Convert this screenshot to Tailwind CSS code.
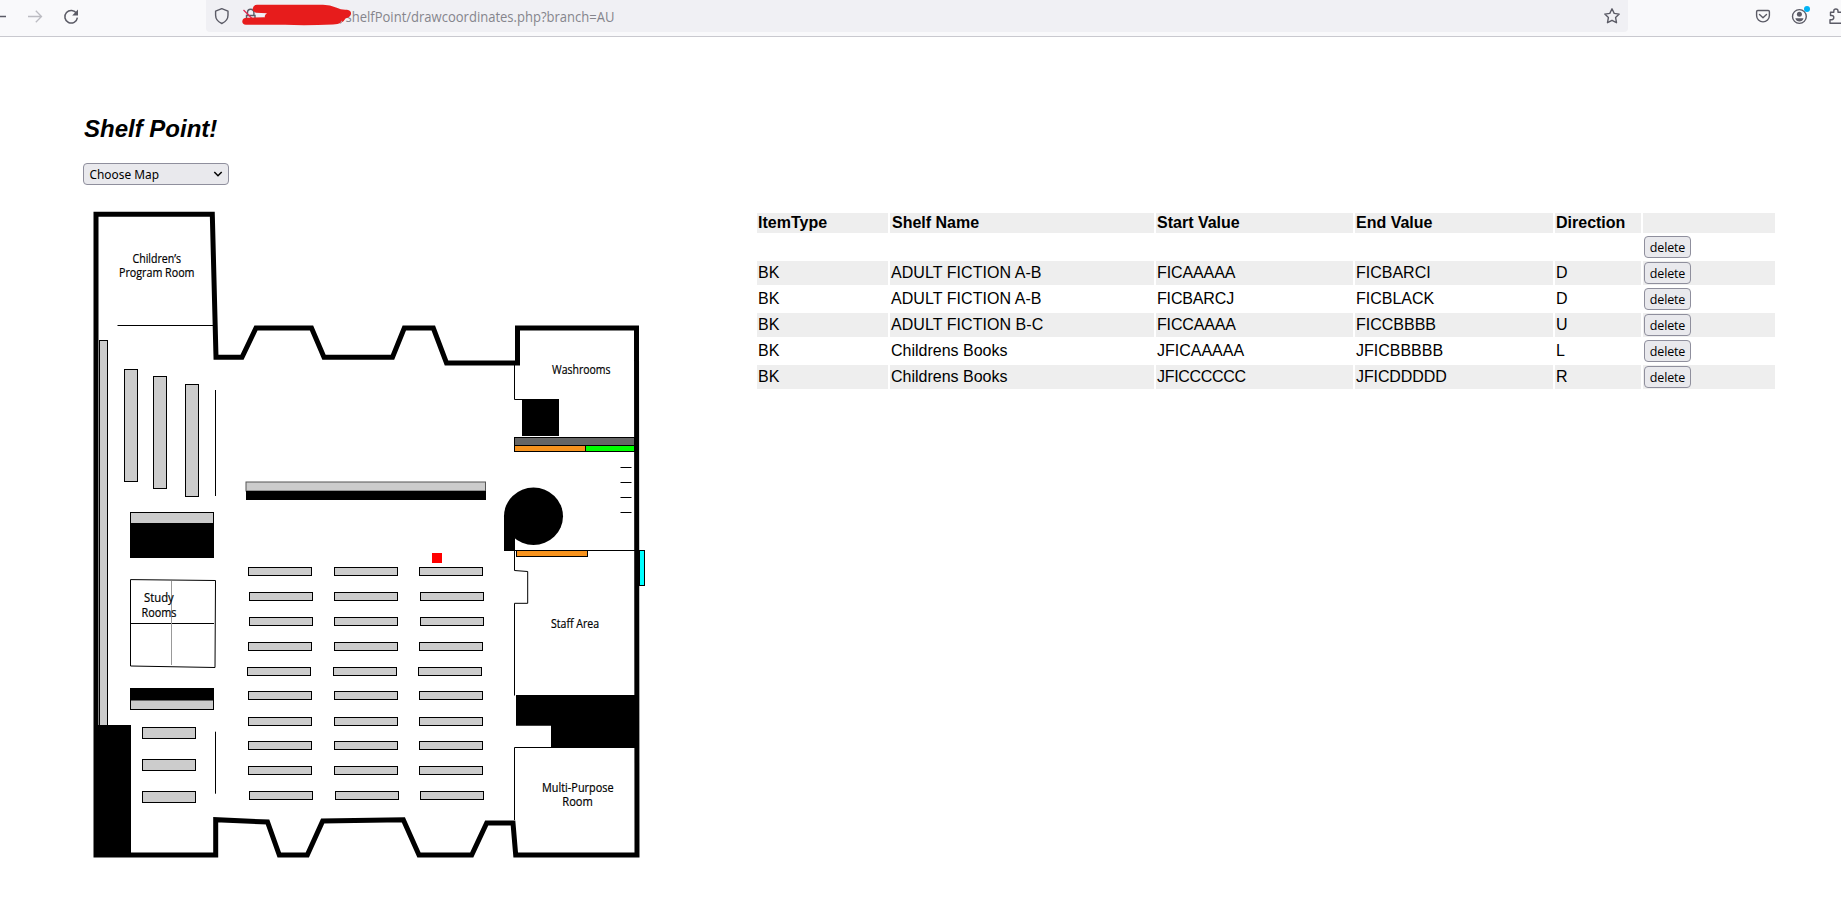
<!DOCTYPE html>
<html lang="en">
<head>
<meta charset="utf-8">
<title>Shelf Point!</title>
<script src="https://cdn.jsdelivr.net/npm/@tailwindcss/browser@4"></script>
</head>
<body class="bg-white text-black overflow-hidden h-[910px] w-[1841px] font-['Liberation_Sans',Arial,sans-serif]">
<header class="h-[37px] bg-[#f9f9fb] border-b border-[#c9c9cf] flex items-start">
  <svg class="w-[206px] h-8 shrink-0" viewBox="0 0 206 32" fill="none" stroke="#5b5b66" stroke-width="1.5">
    <path d="M0 16.5H6"/>
    <path stroke="#bcbcc2" stroke-width="1.3" d="M28 16.5H41.5M35.8 10.8l5.7 5.7-5.7 5.7"/>
    <path d="M76.6 13.6A6.3 6.3 0 1 0 77.4 17.6"/><path fill="#5b5b66" stroke="none" d="M78 9.6V15.4H72.2Z"/>
  </svg>
  <div class="w-[1422px] h-8 bg-[#f0f0f4] rounded-b flex items-center justify-between">
    <svg class="w-[600px] h-8 overflow-visible" viewBox="206 0 600 32" fill="none">
      <path stroke="#5b5b66" stroke-width="1.4" stroke-linejoin="round" d="M221.8 8.7l6.2 2.4v4.2c0 3.6-2.6 6.6-6.2 8.2c-3.600-1.600-6.200-4.600-6.200-8.200v-4.200z"/>
      <path stroke="#5b5b66" stroke-width="1.4" d="M246.500 19v-3.500h8.500v3.500M247.500 15v-2.500a3.200 3.200 0 0 1 6.400 0V15"/>
      <path stroke="#e22850" stroke-width="1.3" d="M243.500 10l9 9"/>
      <text x="345.500" y="21.700" font-size="14" fill="#85858c" textLength="269" lengthAdjust="spacingAndGlyphs" font-family="Open Sans, Noto Sans, sans-serif">shelfPoint/drawcoordinates.php?branch=AU</text>
      <path fill="#e71c1c" d="M257 4.700L322 4.700Q330 4.500 336 7.500Q342 10.300 347 9.700Q351.500 10.500 351 14Q350 17.500 345.500 18.500Q343 24 333 24.400Q305 25.700 285 24.700L246 24.800Q242 24 242.300 21Q243 17.700 247 17.800L265 17.300Q264 15 267 13.200L256 12.700Q252.500 12 252.700 8.500Q253.500 4.700 257 4.700Z"/>
      <path stroke="#a8a8b0" d="M340.500 23.800l1.200-3"/>
    </svg>
    <svg class="w-5 h-5 mr-[6px]" viewBox="0 0 20 20" fill="none" stroke="#5b5b66" stroke-width="1.400" stroke-linejoin="round"><path d="M10 2.800l2.200 4.600 5 .7-3.600 3.500.9 5.100L10 14.300l-4.500 2.400.9-5.100L2.800 8.100l5-.7z"/></svg>
  </div>
  <svg class="w-[213px] h-8 shrink-0" viewBox="1628 0 213 32" fill="none" stroke="#5b5b66" stroke-width="1.400" stroke-linejoin="round" stroke-linecap="round">
    <path d="M1757.800 10.500h10.400q1.200 0 1.200 1.200v3.800a6.400 6.400 0 0 1-12.800 0v-3.800q0-1.200 1.200-1.200zM1759.500 14.500l3.500 3.200 3.500-3.200"/>
    <circle cx="1799.400" cy="16.500" r="6.900"/><circle cx="1799.400" cy="14.200" r="2.500" fill="#5b5b66" stroke="none"/><path fill="#5b5b66" stroke="none" d="M1795.300 18.200h8.200q-1 3.300-4.100 3.300t-4.100-3.300z"/>
    <circle cx="1807" cy="9" r="3" fill="#00b3f4" stroke="none"/>
    <path d="M1842 12.300h-4v-1.200a2.100 2.100 0 0 0-4.200 0v1.200h-3.300v3.200h1.200a2.100 2.100 0 0 1 0 4.200h-1.700v3.500h12"/>
  </svg>
</header>
<main class="pl-[83px] pt-[78px]">
  <h1 class="pl-px text-[24px] leading-[28px] font-bold italic">Shelf Point!</h1>
  <button class="mt-[20px] w-[146px] h-[22px] flex items-center justify-between rounded-[4px] border border-[#8f8f9d] bg-[#e9e9ed] pl-[5px] pr-[5px]">
    <svg class="w-20 h-5" viewBox="0 0 80 20"><text x="0.500" y="14.500" font-size="13" textLength="69.500" lengthAdjust="spacingAndGlyphs" font-family="Noto Sans, sans-serif">Choose Map</text></svg>
    <svg class="w-[10px] h-[10px]" viewBox="0 0 10 10" fill="none" stroke="#000" stroke-width="1.500"><path d="M1.300 3l3.700 3.700L8.700 3"/></svg>
  </button>
  <div class="mt-[17px] flex items-start">
    <svg class="w-[597px] h-[670px] shrink-0" viewBox="83 202 597 670">
      <defs><rect id="s" x=".5" y=".5" width="63" height="8" fill="#ccc" stroke="#000"/></defs>
      <rect x="99.500" y="340.500" width="8" height="385" fill="#ccc" stroke="#000"/>
      <rect x="94" y="725" width="37" height="132"/>
      <path fill="none" stroke="#000" stroke-width="5" d="M96 214.300H212.300L216 357.300H242L256 328H311.500L324 357.300H392.500L404.300 328H433.300L446.500 363H517.500V328H636.500L637 855H515.700L513 823H486.700L471.700 855H419L403.300 819.700L322.700 821L307.300 855H279.300L267.500 822L215.700 819.700V855H96Z"/>
      <g fill="#ccc" stroke="#000">
        <rect x="124.500" y="369.500" width="13" height="112"/><rect x="153.500" y="376.500" width="13" height="112"/><rect x="185.500" y="384.500" width="13" height="112"/>
        <rect x="130.500" y="512.500" width="83" height="45"/><rect x="130.500" y="688.500" width="83" height="21"/>
        <rect x="142.500" y="727.500" width="53" height="11"/><rect x="142.500" y="759.500" width="53" height="11"/><rect x="142.500" y="791.500" width="53" height="11"/>
        <rect x="246" y="482" width="239.500" height="9" stroke="#555"/>
      </g>
      <rect x="130" y="523" width="84" height="35"/><rect x="130" y="688" width="84" height="12.500"/><rect x="246" y="491" width="240" height="9"/>
      <g fill="none" stroke="#000">
        <path d="M117.500 325.500H214M215.500 390V496M215.500 731.700V793.700M130.500 623.500H214"/>
        <path d="M130.500 579.600L215.500 580.500L215 667.500L130.500 666Z"/>
        <path stroke="#999" d="M171.500 581V665"/>
        <path d="M514.500 365V399.500M514.500 399.500H522M620.500 467.500h11M620.500 482.500h11M620.500 497.500h11M620.500 512.500h11M514.500 538V570.500L527.700 571.500V603.300H514.500V695.500M515 550.500H635M514.500 820V747.500H635"/>
      </g>
      <g>
        <use href="#s" x="248" y="567"/><use href="#s" x="334" y="567"/><use href="#s" x="419" y="567"/>
        <use href="#s" x="249" y="592"/><use href="#s" x="334" y="592"/><use href="#s" x="420" y="592"/>
        <use href="#s" x="249" y="617"/><use href="#s" x="334" y="617"/><use href="#s" x="420" y="617"/>
        <use href="#s" x="248" y="642"/><use href="#s" x="334" y="642"/><use href="#s" x="419" y="642"/>
        <use href="#s" x="247" y="667"/><use href="#s" x="333" y="667"/><use href="#s" x="418" y="667"/>
        <use href="#s" x="248" y="691"/><use href="#s" x="334" y="691"/><use href="#s" x="419" y="691"/>
        <use href="#s" x="248" y="717"/><use href="#s" x="334" y="717"/><use href="#s" x="419" y="717"/>
        <use href="#s" x="248" y="741"/><use href="#s" x="334" y="741"/><use href="#s" x="419" y="741"/>
        <use href="#s" x="248" y="766"/><use href="#s" x="334" y="766"/><use href="#s" x="419" y="766"/>
        <use href="#s" x="249" y="791"/><use href="#s" x="335" y="791"/><use href="#s" x="420" y="791"/>
      </g>
      <rect x="432" y="553" width="10" height="10" fill="#f00"/>
      <rect x="522" y="399" width="37" height="37"/>
      <rect x="514.500" y="437.500" width="120" height="8" fill="#666" stroke="#000"/>
      <rect x="514.500" y="445.500" width="71" height="6" fill="#f7931e" stroke="#000"/>
      <rect x="585.500" y="445.500" width="49" height="6" fill="#0f0" stroke="#000"/>
      <ellipse cx="533.500" cy="516.300" rx="29.500" ry="28.700"/><rect x="504" y="515" width="10.700" height="36"/>
      <rect x="516.500" y="550.500" width="71" height="6" fill="#f7931e" stroke="#000"/>
      <rect x="639.500" y="550.500" width="5" height="35" fill="#0ff" stroke="#000"/>
      <path d="M516 695H637V748H551V725.700H516Z"/>
      <g font-family="Open Sans, Noto Sans, sans-serif" font-size="12" stroke="#000" stroke-width=".2">
        <text x="132.500" y="263" textLength="48.500" lengthAdjust="spacingAndGlyphs">Children’s</text>
        <text x="119" y="276.700" textLength="75.500" lengthAdjust="spacingAndGlyphs">Program Room</text>
        <text x="552" y="374" textLength="58.500" lengthAdjust="spacingAndGlyphs">Washrooms</text>
        <text x="144" y="602" textLength="29.700" lengthAdjust="spacingAndGlyphs">Study</text>
        <text x="141.500" y="616.700" textLength="35" lengthAdjust="spacingAndGlyphs">Rooms</text>
        <text x="551" y="628" textLength="48" lengthAdjust="spacingAndGlyphs">Staff Area</text>
        <text x="542" y="791.700" textLength="71.500" lengthAdjust="spacingAndGlyphs">Multi-Purpose</text>
        <text x="562.300" y="805.700" textLength="30.500" lengthAdjust="spacingAndGlyphs">Room</text>
      </g>
    </svg>
    <table class="ml-[75px] mt-[9px] w-[1022px] table-fixed border-separate border-spacing-[2px] text-[16px] leading-[18px] [&_td]:p-px [&_th]:p-px [&_th]:text-left [&_th]:h-5 [&_td]:h-6 [&_td]:align-middle [&_tr:nth-child(odd)>*]:bg-[#eee] [&_button]:block [&_button]:w-[47px] [&_button]:h-[22px] [&_button]:rounded-[4px] [&_button]:border [&_button]:border-[#8f8f9d] [&_button]:bg-[#e9e9ed] [&_button]:pt-px [&_button]:text-[12.5px] [&_button]:tracking-[-0.15px] [&_button]:leading-[19px] [&_button]:font-['Open_Sans','Noto_Sans',sans-serif]">
      <colgroup><col class="w-[131px]"><col class="w-[264px]"><col class="w-[197px]"><col class="w-[198px]"><col class="w-[86px]"><col class="w-[132px]"></colgroup>
      <tbody>
      <tr><th>ItemType</th><th><span class="ml-[1px]">Shelf Name</span></th><th>Start Value</th><th>End Value</th><th>Direction</th><th></th></tr>
      <tr><td></td><td></td><td></td><td></td><td></td><td><button>delete</button></td></tr>
      <tr><td>BK</td><td class="tracking-[0.05px]">ADULT FICTION A-B</td><td class="tracking-[-0.1px]">FICAAAAA</td><td>FICBARCI</td><td>D</td><td><button>delete</button></td></tr>
      <tr><td>BK</td><td class="tracking-[0.05px]">ADULT FICTION A-B</td><td class="tracking-[-0.15px]">FICBARCJ</td><td>FICBLACK</td><td>D</td><td><button>delete</button></td></tr>
      <tr><td>BK</td><td class="tracking-[0.05px]">ADULT FICTION B-C</td><td class="tracking-[-0.15px]">FICCAAAA</td><td>FICCBBBB</td><td>U</td><td><button>delete</button></td></tr>
      <tr><td>BK</td><td>Childrens Books</td><td>JFICAAAAA</td><td>JFICBBBBB</td><td>L</td><td><button>delete</button></td></tr>
      <tr><td>BK</td><td>Childrens Books</td><td class="tracking-[-0.3px]">JFICCCCCC</td><td class="tracking-[-0.1px]">JFICDDDDD</td><td>R</td><td><button>delete</button></td></tr>
      </tbody>
    </table>
  </div>
</main>
</body>
</html>
